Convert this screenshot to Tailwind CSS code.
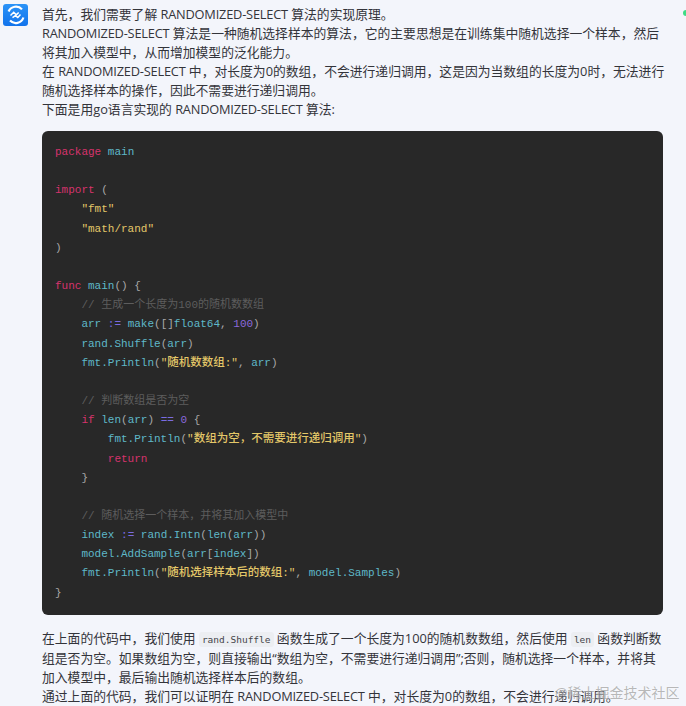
<!DOCTYPE html>
<html lang="zh">
<head>
  <meta charset="UTF-8" />
  <title>RANDOMIZED-SELECT</title>
  <script src="https://cdn.jsdelivr.net/npm/@tailwindcss/browser@4"></script>
</head>
<body class="bg-[#f3f5fb]">
  <div class="relative w-[686px] h-[706px] overflow-hidden font-['Open_Sans','Noto_Sans_CJK_SC',sans-serif] text-[12.8px] leading-[19px] text-[#33343a]">
    <div class="flex items-start">
      <!-- avatar -->
      <div class="w-[42px] pl-[3px] pt-[4px] shrink-0">
        <svg width="25" height="22" viewBox="0 0 25 22" class="block">
          <defs>
            <linearGradient id="logo" x1="0" y1="0" x2="0" y2="1">
              <stop offset="0" stop-color="#2b93f7"/>
              <stop offset="1" stop-color="#1273ec"/>
            </linearGradient>
          </defs>
          <rect width="25" height="22" rx="3" fill="url(#logo)"/>
          <path d="M5.6 7.5A8 8 0 0 1 19 5.4" fill="none" stroke="#fff" stroke-width="2.2"/>
          <path d="M20.4 13.5A8 8 0 0 1 7 16.6" fill="none" stroke="#fff" stroke-width="2.2"/>
          <path d="M7.5 11.5l3.2-3.2 2.6 2.6 2.4-2.4M9.5 13.7l2.8-2 2.5 1.8 2.7-3" fill="none" stroke="#fff" stroke-width="1.5"/>
        </svg>
      </div>

      <!-- answer -->
      <div class="w-[621px] pt-[5px]">
        <p class="whitespace-nowrap">首先&#xFF0C;我们需要了解 <span class="tracking-[-0.2px]">RANDOMIZED-SELECT</span> 算法的实现原理。<br><span class="tracking-[-0.2px]">RANDOMIZED-SELECT</span> 算法是一种随机选择样本的算法&#xFF0C;它的主要思想是在训练集中随机选择一个样本&#xFF0C;然后<br>将其加入模型中&#xFF0C;从而增加模型的泛化能力。<br>在 <span class="tracking-[-0.2px]">RANDOMIZED-SELECT</span> 中&#xFF0C;对长度为0的数组&#xFF0C;不会进行递归调用&#xFF0C;这是因为当数组的长度为0时&#xFF0C;无法进行<br>随机选择样本的操作&#xFF0C;因此不需要进行递归调用。<br>下面是用go语言实现的 <span class="tracking-[-0.2px]">RANDOMIZED-SELECT</span> 算法:</p>

        <pre class="mt-[12px] h-[484px] rounded-[6px] bg-[#282828] px-[13px] pt-[12px] font-['Liberation_Mono','Noto_Sans_CJK_SC',monospace] text-[11px] leading-[19.15px] text-[#a9a9a9]"><span class="text-[#d6336c]">package</span> <span class="text-[#5fb8c8]">main</span>

<span class="text-[#d6336c]">import</span> (
    <span class="text-[#e3c768]">"fmt"</span>
    <span class="text-[#e3c768]">"math/rand"</span>
)

<span class="text-[#d6336c]">func</span> <span class="text-[#5fb8c8]">main</span>() {
    <span class="text-[#5d5d5d]">// 生成一个长度为100的随机数数组</span>
    <span class="text-[#5fb8c8]">arr</span> <span class="text-[#7a6be0]">:=</span> <span class="text-[#5fb8c8]">make</span>([]<span class="text-[#5fb8c8]">float64</span>, <span class="text-[#8a68dc]">100</span>)
    <span class="text-[#5fb8c8]">rand.Shuffle</span>(<span class="text-[#5fb8c8]">arr</span>)
    <span class="text-[#5fb8c8]">fmt.Println</span>(<span class="text-[#e3c768]">"<span class="font-medium leading-none text-[11.5px]">随机数数组</span>:"</span>, <span class="text-[#5fb8c8]">arr</span>)

    <span class="text-[#5d5d5d]">// 判断数组是否为空</span>
    <span class="text-[#d6336c]">if</span> <span class="text-[#5fb8c8]">len</span>(<span class="text-[#5fb8c8]">arr</span>) <span class="text-[#7a6be0]">==</span> <span class="text-[#8a68dc]">0</span> {
        <span class="text-[#5fb8c8]">fmt.Println</span>(<span class="text-[#e3c768]">"<span class="font-medium leading-none text-[11.5px]">数组为空&#xFF0C;不需要进行递归调用</span>"</span>)
        <span class="text-[#d6336c]">return</span>
    }

    <span class="text-[#5d5d5d]">// 随机选择一个样本&#xFF0C;并将其加入模型中</span>
    <span class="text-[#5fb8c8]">index</span> <span class="text-[#7a6be0]">:=</span> <span class="text-[#5fb8c8]">rand.Intn</span>(<span class="text-[#5fb8c8]">len</span>(<span class="text-[#5fb8c8]">arr</span>))
    <span class="text-[#5fb8c8]">model.AddSample</span>(<span class="text-[#5fb8c8]">arr</span>[<span class="text-[#5fb8c8]">index</span>])
    <span class="text-[#5fb8c8]">fmt.Println</span>(<span class="text-[#e3c768]">"<span class="font-medium leading-none text-[11.5px]">随机选择样本后的数组</span>:"</span>, <span class="text-[#5fb8c8]">model.Samples</span>)
}</pre>

        <p class="mt-[14px] whitespace-nowrap">在上面的代码中&#xFF0C;我们使用 <code class="rounded-[3px] bg-[#eceef2] px-[3px] py-[2px] font-['DejaVu_Sans_Mono',monospace] text-[9.5px] text-[#44454a]">rand.Shuffle</code> 函数生成了一个长度为100的随机数数组&#xFF0C;然后使用 <code class="rounded-[3px] bg-[#eceef2] px-[3px] py-[2px] font-['DejaVu_Sans_Mono',monospace] text-[9.5px] text-[#44454a]">len</code> 函数判断数<br>组是否为空。如果数组为空&#xFF0C;则直接输出“数组为空&#xFF0C;不需要进行递归调用”;否则&#xFF0C;随机选择一个样本&#xFF0C;并将其<br>加入模型中&#xFF0C;最后输出随机选择样本后的数组。<br>通过上面的代码&#xFF0C;我们可以证明在 <span class="tracking-[-0.2px]">RANDOMIZED-SELECT</span> 中&#xFF0C;对长度为0的数组&#xFF0C;不会进行递归调用。</p>
      </div>
    </div>

    <!-- status dot and watermark -->
    <span class="absolute left-[683px] top-[10px] h-[6px] w-[6px] rounded-full bg-[#3ddc84]"></span>
    <span class="absolute left-[555px] top-[683px] whitespace-nowrap text-[14px] leading-[20px] text-[#9a9a9a]/70 [text-shadow:0_0_2px_rgba(255,255,255,0.8)]">@稀土掘金技术社区</span>
  </div>
</body>
</html>
